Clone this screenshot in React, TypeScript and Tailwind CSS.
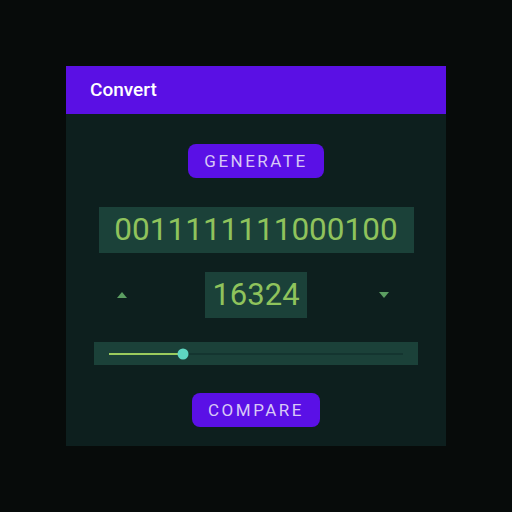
import React from 'react';

const roboto = { fontFamily: 'Roboto, "Liberation Sans", sans-serif' };

function PillButton({ label }: { label: string }) {
  return (
    <button className="rounded-[8px] bg-[#5a10e6] px-[16px] h-[34px] text-[17px] tracking-[2.5px] text-[#d8c8f7] leading-none">
      {label}
    </button>
  );
}

function Slider({ value }: { value: number }) {
  return (
    <div className="w-[324px] h-[23px] bg-[#1b4139] flex items-center px-[15px]">
      <div className="relative w-full h-[2px] bg-[#143530]">
        <div className="absolute left-0 top-0 h-[2px] bg-[#9bcb5d]" style={{ width: `${value}%` }} />
        <div
          className="absolute top-1/2 w-[11px] h-[11px] -translate-x-1/2 -translate-y-1/2 rounded-full bg-[#5fd6c1]"
          style={{ left: `${value}%` }}
        />
      </div>
    </div>
  );
}

export default function App() {
  return (
    <div className="w-[512px] h-[512px] bg-[#070b0a] flex items-center justify-center" style={roboto}>
      <div className="w-[380px] h-[380px] bg-[#0d1f1e] flex flex-col">
        <div className="h-[48px] bg-[#5a10e4] flex items-center px-[24px]">
          <span className="text-[19px] font-medium text-white">Convert</span>
        </div>
        <div className="flex flex-col items-center pt-[30px]">
          <PillButton label="GENERATE" />
          <div className="mt-[29px] w-[315px] h-[46px] bg-[#1b4139] flex items-center justify-center text-[31.5px] text-[#8fc35c]">
            0011111111000100
          </div>
          <div className="mt-[19px] w-full flex items-center pl-[51px]">
            <svg width="10" height="6" viewBox="0 0 10 6">
              <polygon points="0,6 5,0 10,6" fill="#5c9e62" />
            </svg>
            <div className="ml-[78px] w-[102px] h-[46px] bg-[#1b4139] flex items-center justify-center text-[31px] text-[#8fc35c]">
              16324
            </div>
            <svg className="ml-[72px]" width="10" height="6" viewBox="0 0 10 6">
              <polygon points="0,0 10,0 5,6" fill="#5c9e62" />
            </svg>
          </div>
          <div className="mt-[24px]">
            <Slider value={25} />
          </div>
          <div className="mt-[28px]">
            <PillButton label="COMPARE" />
          </div>
        </div>
      </div>
    </div>
  );
}
